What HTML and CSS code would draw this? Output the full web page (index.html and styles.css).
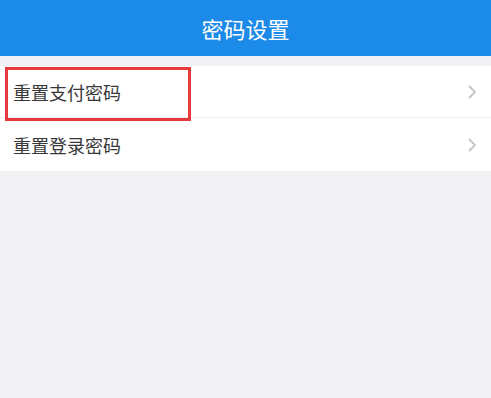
FILE: index.html
```html
<!DOCTYPE html>
<html>
<head>
  <meta charset="UTF-8">
  <title>密码设置</title>
  <link rel="stylesheet" href="styles.css">
</head>
<body>
  <div class="header">密码设置</div>

  <div class="list">
    <div class="item">
      <span class="label highlight">重置支付密码</span>
      <svg class="arrow" width="10" height="16" viewBox="0 0 10 16"><path d="M2 2 L8 8 L2 14" fill="none" stroke="#c4c4c4" stroke-width="1.8"/></svg>
    </div>
    <div class="item">
      <span class="label">重置登录密码</span>
      <svg class="arrow" width="10" height="16" viewBox="0 0 10 16"><path d="M2 2 L8 8 L2 14" fill="none" stroke="#c4c4c4" stroke-width="1.8"/></svg>
    </div>
  </div>
</body>
</html>
```

FILE: styles.css
```css
*, *::after {
  box-sizing: border-box;
}

html, body {
  margin: 0;
  padding: 0;
  height: 100%;
  background: #f2f2f4;
  font-family: "Noto Sans CJK SC", "Noto Sans", sans-serif;
}

.header {
  height: 56px;
  background: #1b8ae8;
  color: #fff;
  font-size: 22px;
  display: flex;
  align-items: center;
  justify-content: center;
}

.list {
  margin-top: 10px;
  background: #fff;
}

.item {
  position: relative;
  height: 52px;
  display: flex;
  align-items: center;
  justify-content: space-between;
  padding: 0 14px 0 13px;
  border-bottom: 1px solid #f0f0f0;
}

.item:last-child {
  height: 53px;
  border-bottom: none;
}

.label {
  font-size: 18px;
  color: #383838;
}

/* red annotation box around the first row */
.highlight::after {
  content: "";
  position: absolute;
  left: 5px;
  top: 1px;
  width: 186px;
  height: 54px;
  border: 3px solid #e63a3f;
}
```
